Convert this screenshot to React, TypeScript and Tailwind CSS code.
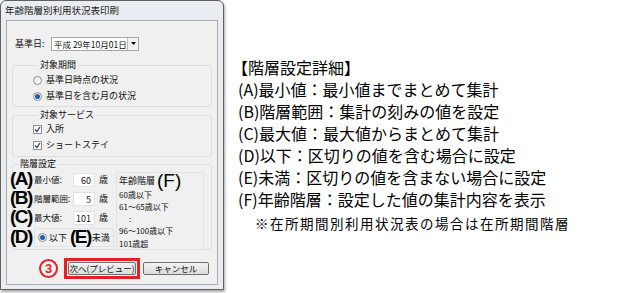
import React from 'react'

const jp = "font-['Noto_Sans_CJK_JP',sans-serif]"

const Big = ({ t }: { t: string }) => (
  <span className="font-['Liberation_Sans',sans-serif] text-[19px] leading-[18px] font-bold text-black tracking-[-1.5px] whitespace-nowrap">({t})</span>
)

const Radio = ({ on }: { on?: boolean }) => (
  <span className="w-[9px] h-[9px] rounded-full border border-[#8e8f8f] bg-gradient-to-br from-[#e4e4e4] to-[#fefefe] flex items-center justify-center shrink-0">
    {on && <span className="w-[5px] h-[5px] rounded-full bg-[#1b5fb3]" />}
  </span>
)

const Check = () => (
  <span className="w-[9px] h-[9px] border border-[#8e8f8f] bg-white flex items-center justify-center shrink-0">
    <svg width="7" height="7" viewBox="0 0 7 7">
      <path d="M1 3.5 L3 5.5 L6 1" stroke="#2a3a7a" strokeWidth="1.3" fill="none" />
    </svg>
  </span>
)

const NumBox = ({ v }: { v: string }) => (
  <span className="w-[22px] h-[14px] bg-white border border-[#e3e3e3] text-right pr-[3px] leading-[13px] shrink-0">{v}</span>
)

const Btn = ({ label }: { label: string }) => (
  <div className="h-[13px] border border-[#707070] rounded-[2px] bg-gradient-to-b from-[#f2f2f2] to-[#dddddd] flex items-center justify-center text-[8.5px] leading-none whitespace-nowrap">
    {label}
  </div>
)

const Dialog = () => (
  <div className={`w-[224px] h-[290px] border border-[#5f5f5f] rounded-t-[6px] bg-[#e9ecf0] flex flex-col shrink-0 shadow-[1px_2px_3px_rgba(0,0,0,0.35)] ${jp}`}>
    <div className="h-[19px] px-[4px] flex items-center text-[9.5px] text-[#222]">年齢階層別利用状況表印刷</div>
    <div className="flex-1 mx-[5px] mb-[4px] border border-[#a8acb0] bg-[#f0f0f0] text-[9px] text-[#111] flex flex-col px-[5px] whitespace-nowrap">
      {/* 基準日 */}
      <div className="flex items-center mt-[16px] h-[13px]">
        <span className="w-[39px] pl-[3px]">基準日:</span>
        <div className="flex h-[14px] border border-[#a8a8a8] bg-white">
          <span className="w-[75px] pl-[2px] leading-[12px] text-[8.5px]">平成 29年10月01日</span>
          <span className="w-[11px] border-l border-[#bbb] bg-[#f2f2f2] flex items-center justify-center">
            <svg width="5" height="3" viewBox="0 0 5 3"><path d="M0 0H5L2.5 3Z" fill="#000" /></svg>
          </span>
        </div>
      </div>

      <fieldset className="mt-[9px] border border-[#d5dfe5] rounded-[3px] pl-[20px] h-[48px]">
        <legend className="px-[2px] ml-[5px] leading-[12px]">対象期間</legend>
        <div className="flex items-center gap-[4px] h-[16px] mt-[1px]"><Radio />基準日時点の状況</div>
        <div className="flex items-center gap-[4px] h-[16px]"><Radio on />基準日を含む月の状況</div>
      </fieldset>

      <fieldset className="mt-[2px] border border-[#d5dfe5] rounded-[3px] pl-[20px] h-[48px]">
        <legend className="px-[2px] ml-[5px] leading-[12px]">対象サービス</legend>
        <div className="flex items-center gap-[4px] h-[16px]"><Check />入所</div>
        <div className="flex items-center gap-[4px] h-[16px]"><Check />ショートステイ</div>
      </fieldset>

      <fieldset className="mt-[1px] border border-[#d5dfe5] rounded-[3px] h-[92px] flex">
        <legend className="px-[2px] ml-[5px] leading-[12px]">階層設定</legend>
        <div className="flex -ml-[3px]">
          <div className="flex flex-col w-[104px]">
            {[
              ['A', '最小値:', '60'],
              ['B', '階層範囲:', '5'],
              ['C', '最大値:', '101'],
            ].map(([k, l, v]) => (
              <div key={k} className="flex items-center h-[19px]">
                <span className="w-[24px] shrink-0"><Big t={k} /></span>
                <span className="w-[39px] shrink-0 text-[8.5px]">{l}</span>
                <NumBox v={v} />
                <span className="ml-[4px]">歳</span>
              </div>
            ))}
            <div className="flex items-center h-[19px] mt-[1px]">
              <span className="w-[24px] shrink-0"><Big t="D" /></span>
              <div className="flex items-center border border-[#dfe3e6] h-[19px] pl-[3px] pr-[3px]">
                <Radio on />
                <span className="ml-[2px]">以下</span>
                <span className="ml-[3px]"><Big t="E" /></span>
                <span className="ml-[1px]">未満</span>
              </div>
            </div>
          </div>
          <div className="ml-[2px] mt-[2px] w-[88px] h-[78px] border border-[#dfe3e6] pl-[2px] flex flex-col leading-[12px]">
            <div className="flex items-center">
              年齢階層<span className="ml-[2px] font-['Liberation_Sans',sans-serif] text-[19px] leading-[16px] text-black">(F)</span>
            </div>
            <span className="text-[8px]">60歳以下</span>
            <span className="text-[8px]">61～65歳以下</span>
            <span className="text-[8px] pl-[10px]">:</span>
            <span className="text-[8px]">96～100歳以下</span>
            <span className="text-[8px] mt-[1px]">101歳超</span>
          </div>
        </div>
      </fieldset>

      <div className="flex items-center mt-[8px]">
        <span className="ml-[27px] w-[19px] h-[19px] rounded-full border-2 border-[#e4202a] text-[#e4202a] flex items-center justify-center text-[13px] font-bold leading-none font-['Liberation_Sans',sans-serif]">3</span>
        <div className="ml-[6px] border-[3px] border-[#e4202a] p-[1px] w-[76px]">
          <Btn label="次へ(プレビュー)" />
        </div>
        <div className="ml-[3px] w-[66px]">
          <Btn label="キャンセル" />
        </div>
      </div>
    </div>
  </div>
)

const rows = [
  '(A)最小値：最小値までまとめて集計',
  '(B)階層範囲：集計の刻みの値を設定',
  '(C)最大値：最大値からまとめて集計',
  '(D)以下：区切りの値を含む場合に設定',
  '(E)未満：区切りの値を含まない場合に設定',
  '(F)年齢階層：設定した値の集計内容を表示',
]

export default function App() {
  return (
    <div className={`w-[637px] h-[293px] bg-white flex ${jp}`}>
      <Dialog />
      <div className="ml-[14px] mt-[56px] text-[16px] text-black whitespace-nowrap flex flex-col">
        <div className="-ml-[6px] leading-[22px]">【階層設定詳細】</div>
        {rows.map((r) => (
          <div key={r} className="leading-[22px]">{r}</div>
        ))}
        <div className="mt-[3px] text-[13.5px] leading-[20px] tracking-[1.5px] pl-[17px]">※在所期間別利用状況表の場合は在所期間階層</div>
      </div>
    </div>
  )
}
